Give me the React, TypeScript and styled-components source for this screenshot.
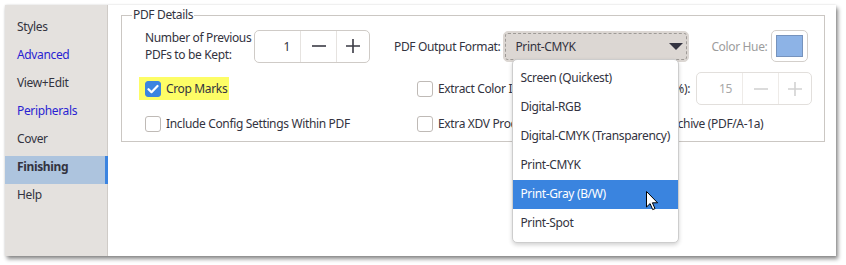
import React from "react";
import styled, { createGlobalStyle, css } from "styled-components";

const GlobalStyle = createGlobalStyle`
  html, body { margin: 0; padding: 0; background: #ffffff; }
  body {
    font-family: "Noto Sans", "Open Sans", sans-serif;
    font-size: 12px;
    letter-spacing: -0.35px;
    color: #333340;
  }
  * { box-sizing: border-box; }
`;

const Page = styled.div`
  width: 846px;
  height: 265px;
  padding: 5px 0 0 5px;
`;

const Window = styled.div`
  display: flex;
  width: 831px;
  height: 251px;
  background: #ffffff;
  box-shadow: 2px 3px 4px rgba(0, 0, 0, 0.45), 0 0 2px rgba(0, 0, 0, 0.12);
`;

const Sidebar = styled.nav`
  width: 103px;
  flex: none;
  background: #e4e1de;
  border-right: 1px solid #cfcbc7;
  padding-top: 11px;
  display: flex;
  flex-direction: column;
`;

const NavItem = styled.div<{ $link?: boolean; $active?: boolean }>`
  height: 28px;
  padding: 3px 0 0 12px;
  line-height: 16px;
  font-size: 12px;
  color: ${(p) => (p.$link ? "#2a1fd2" : "#333340")};
  ${(p) =>
    p.$active &&
    css`
      background: #adc4de;
      font-weight: 700;
      box-shadow: inset -3px 0 0 #3b84e0;
      margin-right: -1px;
    `}
`;

const Content = styled.main`
  flex: 1;
  padding: 2px 0 0 13px;
  position: relative;
`;

const Group = styled.fieldset`
  width: 704px;
  margin: 0;
  padding: 0 0 9px 23px;
  border: 1px solid #cbc7c3;
  border-radius: 0;
`;

const Legend = styled.legend`
  margin-left: -13px;
  padding: 0 1px;
  line-height: 16px;
  font-size: 12px;
`;

const Row = styled.div<{ $top: number }>`
  display: flex;
  align-items: center;
  margin-top: ${(p) => p.$top}px;
`;

const Cell = styled.div<{ $w?: number }>`
  display: flex;
  align-items: center;
  flex: none;
  ${(p) => p.$w !== undefined && `width: ${p.$w}px;`}
`;

const LabelStack = styled.div`
  width: 109px;
  line-height: 17px;
  white-space: nowrap;
`;

const SpinBox = styled.div<{ $disabled?: boolean }>`
  display: flex;
  height: 33px;
  width: 116px;
  border: 1px solid ${(p) => (p.$disabled ? "#e2dfdc" : "#cfcbc7")};
  border-radius: 5px;
  color: ${(p) => (p.$disabled ? "#a8a8a8" : "#333340")};
`;

const SpinValue = styled.div`
  width: 45px;
  display: flex;
  align-items: center;
  justify-content: flex-end;
  padding-right: 10px;
`;

const SpinButton = styled.div<{ $disabled?: boolean; $w: number }>`
  width: ${(p) => p.$w}px;
  border-left: 1px solid ${(p) => (p.$disabled ? "#eeebe8" : "#e6e3e0")};
  display: flex;
  align-items: center;
  justify-content: center;
  color: ${(p) => (p.$disabled ? "#cfcfcf" : "#333340")};
`;

const InlineLabel = styled.span<{ $muted?: boolean }>`
  color: ${(p) => (p.$muted ? "#9c9c9c" : "#333340")};
  white-space: nowrap;
`;

const SelectWrap = styled.div`
  position: relative;
  width: 186px;
  height: 31px;
  margin-left: 3px;
`;

const SelectBox = styled.div`
  height: 100%;
  border-radius: 5px;
  background: #dcd7d3;
  border: 1px solid #dcd7d3;
  outline: 1px dashed #9e9a96;
  outline-offset: -3px;
  display: flex;
  align-items: center;
  justify-content: space-between;
  padding: 0 5px 0 11px;
`;

const Swatch = styled.div`
  width: 37px;
  height: 32px;
  margin-left: 4px;
  border: 1px solid #d3cfcb;
  border-radius: 5px;
  padding: 4px;
  display: flex;
`;

const SwatchColor = styled.div`
  flex: 1;
  background: #8db3e6;
  border: 1px solid #7693bd;
`;

const CheckItem = styled.label<{ $highlight?: boolean }>`
  display: flex;
  align-items: center;
  gap: 5px;
  white-space: nowrap;
  ${(p) =>
    p.$highlight &&
    css`
      background: #fdfd66;
      margin-left: -6px;
      padding: 3px 2px 3px 6px;
    `}
`;

const Box = styled.span<{ $checked?: boolean }>`
  width: 16px;
  height: 16px;
  flex: none;
  border-radius: 3px;
  border: 1px solid ${(p) => (p.$checked ? "#3b84e0" : "#bfbab6")};
  background: ${(p) => (p.$checked ? "#3b84e0" : "#ffffff")};
  display: flex;
  align-items: center;
  justify-content: center;
`;

const Menu = styled.div`
  position: absolute;
  left: 9px;
  top: 28px;
  width: 167px;
  padding: 4px 0;
  background: #ffffff;
  border: 1px solid #cdcdcd;
  border-radius: 5px;
  box-shadow: 0 2px 4px rgba(0, 0, 0, 0.18);
  z-index: 5;
`;

const MenuItem = styled.div<{ $active?: boolean }>`
  height: 29px;
  line-height: 28px;
  padding-left: 7px;
  white-space: nowrap;
  background: ${(p) => (p.$active ? "#3a84df" : "transparent")};
  color: ${(p) => (p.$active ? "#ffffff" : "#333340")};
`;

const Cursor = styled.svg`
  position: absolute;
  left: 133px;
  top: 131px;
  z-index: 6;
`;

const Minus = ({ color }: { color: string }) => (
  <svg width="14" height="14" viewBox="0 0 14 14">
    <path d="M0 7h14" stroke={color} strokeWidth="1.6" />
  </svg>
);

const Plus = ({ color }: { color: string }) => (
  <svg width="14" height="14" viewBox="0 0 14 14">
    <path d="M0 7h14M7 0v14" stroke={color} strokeWidth="1.6" />
  </svg>
);

const Check = () => (
  <svg width="12" height="10" viewBox="0 0 12 10">
    <path d="M1.5 5.2l3 3L10.5 2" fill="none" stroke="#fff" strokeWidth="2.2" strokeLinecap="round" strokeLinejoin="round" />
  </svg>
);

const Spin = ({ value, disabled }: { value: string; disabled?: boolean }) => {
  const c = disabled ? "#d2d2d2" : "#3a3a44";
  return (
    <SpinBox $disabled={disabled}>
      <SpinValue>{value}</SpinValue>
      <SpinButton $w={36} $disabled={disabled}>
        <Minus color={c} />
      </SpinButton>
      <SpinButton $w={33} $disabled={disabled}>
        <Plus color={c} />
      </SpinButton>
    </SpinBox>
  );
};

const nav = [
  { label: "Styles" },
  { label: "Advanced", link: true },
  { label: "View+Edit" },
  { label: "Peripherals", link: true },
  { label: "Cover" },
  { label: "Finishing", active: true },
  { label: "Help" },
];

const formats = [
  "Screen (Quickest)",
  "Digital-RGB",
  "Digital-CMYK (Transparency)",
  "Print-CMYK",
  "Print-Gray (B/W)",
  "Print-Spot",
];

export default function App() {
  return (
    <>
      <GlobalStyle />
      <Page>
        <Window>
          <Sidebar>
            {nav.map((n) => (
              <NavItem key={n.label} $link={n.link} $active={n.active}>
                {n.label}
              </NavItem>
            ))}
          </Sidebar>
          <Content>
            <Group>
              <Legend>PDF Details</Legend>
              <Row $top={6}>
                <LabelStack>
                  Number of Previous
                  <br />
                  PDFs to be Kept:
                </LabelStack>
                <Spin value="1" />
                <Cell style={{ marginLeft: 24 }}>
                  <InlineLabel>PDF Output Format:</InlineLabel>
                  <SelectWrap>
                    <SelectBox>
                      <span>Print-CMYK</span>
                      <svg width="14" height="7" viewBox="0 0 14 7">
                        <path d="M0 0h14L7 7z" fill="#333340" />
                      </svg>
                    </SelectBox>
                    <Menu>
                      {formats.map((f) => (
                        <MenuItem key={f} $active={f === "Print-Gray (B/W)"}>
                          {f}
                        </MenuItem>
                      ))}
                      <Cursor width="13" height="20" viewBox="0 0 13 20">
                        <path
                          d="M0.5 0.5v15.5l3.6-3.4 2.6 6 2.3-1-2.6-5.8h5.2z"
                          fill="#ffffff"
                          stroke="#000000"
                          strokeWidth="1"
                          strokeLinejoin="round"
                        />
                      </Cursor>
                    </Menu>
                  </SelectWrap>
                </Cell>
                <Cell style={{ marginLeft: 22 }}>
                  <InlineLabel $muted>Color Hue:</InlineLabel>
                  <Swatch>
                    <SwatchColor />
                  </Swatch>
                </Cell>
              </Row>
              <Row $top={9}>
                <Cell $w={272}>
                  <CheckItem $highlight>
                    <Box $checked>
                      <Check />
                    </Box>
                    Crop Marks
                  </CheckItem>
                </Cell>
                <Cell $w={279} style={{ justifyContent: "space-between", paddingRight: 6 }}>
                  <CheckItem>
                    <Box />
                    Extract Color Info
                  </CheckItem>
                  <InlineLabel>Tint Percentage (%):</InlineLabel>
                </Cell>
                <Spin value="15" disabled />
              </Row>
              <Row $top={10}>
                <Cell $w={272}>
                  <CheckItem>
                    <Box />
                    Include Config Settings Within PDF
                  </CheckItem>
                </Cell>
                <Cell $w={204}>
                  <CheckItem>
                    <Box />
                    Extra XDV Processing
                  </CheckItem>
                </Cell>
                <CheckItem>
                  <Box />
                  PDF Archive (PDF/A-1a)
                </CheckItem>
              </Row>
            </Group>
          </Content>
        </Window>
      </Page>
    </>
  );
}
